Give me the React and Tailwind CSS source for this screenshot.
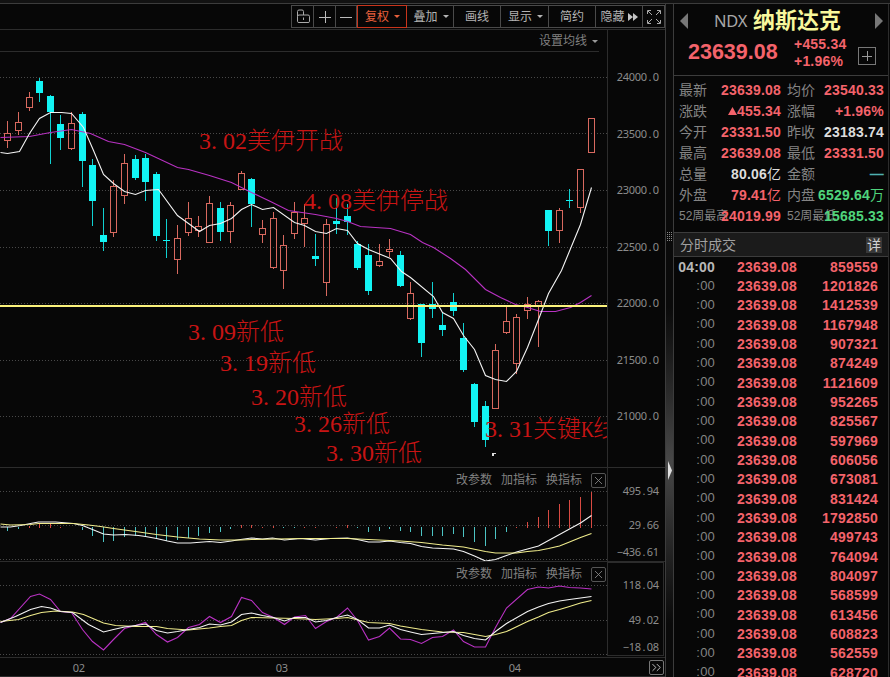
import { ChevronsRight, X } from 'lucide-react';

// [x, high, bodyTop, bodyBottom, low, rising]
const CANDLES = [
  [7, 121, 133, 141, 148, 1], [18, 112, 122, 131, 135, 1], [29, 92, 97, 108, 111, 1],
  [39, 78, 81, 93, 102, 0], [50, 95, 96, 112, 164, 0], [60, 115, 124, 138, 150, 0],
  [71, 112, 123, 149, 150, 1], [82, 112, 114, 161, 187, 0], [92, 159, 165, 201, 226, 0],
  [103, 208, 235, 242, 251, 0], [113, 180, 186, 233, 237, 1], [124, 154, 163, 196, 204, 1],
  [135, 155, 159, 178, 180, 0], [145, 154, 158, 182, 201, 0], [156, 172, 174, 236, 241, 0],
  [166, 219, 240, 241, 258, 0], [177, 225, 238, 260, 274, 1], [188, 202, 218, 233, 236, 1],
  [198, 216, 226, 231, 237, 1], [209, 196, 203, 243, 243, 1], [220, 202, 208, 232, 241, 0],
  [230, 202, 205, 232, 243, 1], [241, 171, 173, 190, 190, 1], [251, 178, 179, 204, 227, 0],
  [262, 220, 228, 235, 243, 1], [273, 212, 218, 268, 269, 1], [283, 235, 245, 271, 289, 1],
  [294, 202, 212, 234, 239, 1], [304, 204, 218, 224, 247, 1], [315, 234, 256, 259, 266, 0],
  [326, 219, 224, 283, 296, 1], [336, 198, 221, 224, 234, 0], [347, 204, 216, 222, 235, 0],
  [357, 241, 244, 268, 270, 0], [368, 244, 255, 291, 295, 0], [379, 244, 261, 266, 267, 1],
  [389, 239, 249, 252, 257, 1], [400, 251, 255, 286, 287, 0], [410, 282, 293, 319, 320, 1],
  [421, 304, 304, 343, 357, 0], [432, 282, 304, 309, 318, 0], [442, 312, 325, 330, 336, 0],
  [453, 293, 302, 311, 316, 0], [463, 323, 338, 370, 372, 0], [474, 383, 384, 422, 427, 0],
  [485, 401, 406, 440, 447, 0], [495, 344, 350, 409, 409, 1], [506, 307, 321, 333, 334, 1],
  [516, 314, 317, 364, 374, 1], [527, 297, 304, 311, 319, 1], [538, 300, 301, 307, 347, 1],
  [548, 210, 210, 231, 246, 0], [559, 208, 210, 231, 243, 1], [569, 189, 200, 201, 208, 0],
  [580, 169, 169, 208, 213, 1], [591, 118, 118, 153, 153, 1],
];

const MA_FAST = '0,152 7,153 19,151 29,133 39,118 50,112 61,112 71,113 83,127 93,150 103,174 113,183 124,191 135,194 145,190 158,189 177,215 188,223 199,231 209,225 220,223 231,218 241,209 251,204 262,209 273,207 294,222 304,225 315,231 326,233 336,228 347,230 357,243 368,249 390,258 401,271 410,277 433,296 442,312 453,318 463,335 474,349 485,375 495,379 506,381 516,371 527,347 538,319 548,293 561,270 580,224 591,187';
const MA_SLOW = '0,137 29,136 50,132 71,129 90,133 108,141 124,144 145,152 177,167 188,169 209,175 231,182 251,192 270,201 288,210 315,214 336,218 347,221 360,226 390,228 410,234 422,242 433,247 450,258 465,269 485,289 500,297 515,304 527,307 540,311 555,311 570,307 580,302 591,295';

// [x, y, up]
const MACD_BARS = [
  [7, 531, 0], [18, 529, 0], [29, 526, 1], [39, 524, 1], [50, 524, 1], [60, 527, 1],
  [82, 530, 0], [92, 536, 0], [103, 542, 0], [113, 541, 0], [124, 537, 0], [135, 536, 0],
  [145, 536, 0], [156, 538, 0], [166, 541, 0], [177, 540, 0], [188, 538, 0], [198, 536, 0],
  [209, 533, 0], [220, 532, 0], [230, 529, 0], [241, 525, 1], [251, 525, 1], [262, 527, 1],
  [273, 526, 1], [283, 528, 0], [294, 528, 0], [304, 527, 1], [315, 527, 1], [336, 527, 1],
  [347, 525, 1], [357, 528, 0], [368, 532, 0], [379, 531, 0], [389, 529, 0], [400, 531, 0],
  [410, 532, 0], [421, 536, 0], [432, 536, 0], [442, 536, 0], [453, 534, 0], [463, 537, 0],
  [474, 542, 0], [485, 546, 0], [495, 539, 0], [506, 532, 0], [516, 527, 1], [527, 522, 1],
  [538, 517, 1], [548, 510, 1], [559, 504, 1], [569, 500, 1], [580, 497, 1], [591, 492, 1],
];
const DIF = '0,526.5 10,526.5 20,525 30,523 38,521.5 55,521.5 73,523 82,525 92,529 103,533.5 113,534.5 125,534 138,535 145,536 156,538 167,540.5 177,542.5 190,542.5 209,541 220,542 231,540.5 240,539 251,537.5 262,538.5 272,537.5 284,539.5 300,538 315,539.5 330,538 347,537.5 357,539 368,541.5 379,541.5 389,540.5 400,542 410,543 421,546 432,547.5 453,548.5 463,551 474,555.5 485,560.5 495,559 506,555 516,551.5 527,548.5 538,545.5 548,540 559,534 569,528.5 580,522.5 591,515';
const DEA = '0,523.5 10,524.5 30,524 38,523 73,523 88,524.5 100,526 113,528 135,531 156,534 177,536.5 199,538.5 220,539.5 240,539.5 251,539 300,538 347,538 368,539 400,540.5 421,542 442,544.5 463,546.5 485,551 495,552.5 516,552.5 527,551 538,550 548,548 559,545.5 569,541.5 580,537 591,533';

const KDJ_J = '0,622 10,618 30,596 39,593.5 50,599 60,611 71,612 82,629 92,641 103,649.5 113,639 124,628 135,625 145,622 156,634 167,641.5 177,637 188,627 199,624 209,616 220,622 231,616 241,597 251,600 262,612 273,617 284,624 294,616.5 305,615 315,628 326,621 336,617 347,607.5 357,620 368,639.5 379,636 389,627.5 400,638.5 410,639 421,643 432,637 442,636 453,629.5 463,641 474,646.5 485,646.5 495,627 506,607.5 527,589 538,586.5 548,587.5 559,585.5 569,587 580,587.5 591,588.5';
const KDJ_K = '0,622 15,616 30,609 41,606 50,607.5 60,611 72,612 88,624 103,631.5 113,629 124,626.5 135,625 145,623.5 156,630 167,632.5 177,631 188,629 199,627 209,623.5 220,624.5 231,621.5 241,614 251,612.5 262,615 273,617 284,620.5 294,617 305,617 315,621.5 326,620 336,617 347,614.5 357,619 368,627.5 379,627.5 389,624.5 400,629 410,631.5 421,634 432,633 453,631 463,635 474,638 485,639.5 495,631 506,623 527,611 538,606.5 548,603 559,600.5 569,599 580,597.5 591,596';
const KDJ_D = '0,621 18,619 30,615 41,612 55,610.5 72,611.5 83,614 103,622.5 115,625 135,626 156,626 167,628 188,629.5 209,627.5 220,626 231,625 241,620 251,617 273,617.5 294,618 315,619 336,618 347,617 368,622 389,623 400,625.5 421,629 442,631.5 463,632 485,636 495,634 506,631 527,621 538,616.5 548,612 559,609 569,606 580,602.5 591,600';

const NOTES = [
  { num: '3.02', text: '美伊开战', pos: 'left-[199px] top-[72px]' },
  { num: '4.08', text: '美伊停战', pos: 'left-[304px] top-[132px]' },
  { num: '3.09', text: '新低', pos: 'left-[188px] top-[263px]' },
  { num: '3.19', text: '新低', pos: 'left-[220px] top-[294px]' },
  { num: '3.20', text: '新低', pos: 'left-[251px] top-[328px]' },
  { num: '3.26', text: '新低', pos: 'left-[294px] top-[355px]' },
  { num: '3.30', text: '新低', pos: 'left-[326px] top-[384px]' },
  { num: '3.31', text: '关键K线', pos: 'left-[485px] top-[360px]' },
];

const QUOTES = [
  ['最新', '23639.08', 'text-[#f4636b]', '均价', '23540.33', 'text-[#f4636b]'],
  ['涨跌', '▲455.34', 'text-[#f4636b]', '涨幅', '+1.96%', 'text-[#f4636b]'],
  ['今开', '23331.50', 'text-[#f4636b]', '昨收', '23183.74', 'text-[#dcdcdc]'],
  ['最高', '23639.08', 'text-[#f4636b]', '最低', '23331.50', 'text-[#f4636b]'],
  ['总量', '80.06亿', 'text-[#dcdcdc]', '金额', '—', 'text-[#4fb0b0]'],
  ['外盘', '79.41亿', 'text-[#f4636b]', '内盘', '6529.64万', 'text-[#4fd47c]'],
  ['52周最高', '24019.99', 'text-[#f4636b]', '52周最低', '15685.33', 'text-[#4fd47c]'],
];

const VOLUMES = [
  859559, 1201826, 1412539, 1167948, 907321, 874249, 1121609, 952265, 825567, 597969, 606056,
  673081, 831424, 1792850, 499743, 764094, 804097, 568599, 613456, 608823, 562559, 628720,
];

// fixed pitch digits
function Digits({ value }) {
  return (
    <span className="flex font-['Noto_Sans'] text-[11px] leading-none text-[#8c8c8c]">
      {value.split('').map((c, i) => (
        <span key={i} className="w-[6px] flex justify-center">{c === '-' ? '−' : c}</span>
      ))}
    </span>
  );
}

function Grid({ lines }) {
  return lines.map((y) => (
    <line key={y} x1="0" x2="607" y1={y + 0.5} y2={y + 0.5} stroke="#484848" strokeDasharray="1 2" shapeRendering="crispEdges" />
  ));
}

function Line({ points, color }) {
  return <polyline points={points} fill="none" stroke={color} strokeWidth="1.1" transform="translate(0.5 0.5)" />;
}

function Candle({ data }) {
  const [x, high, top, bottom, low, rising] = data;
  const color = rising ? '#d8695f' : '#12f4f4';
  if (!rising) {
    return (
      <g fill={color} shapeRendering="crispEdges">
        <rect x={x} y={high} width="1" height={low - high} opacity="0.85" />
        <rect x={x - 3} y={top} width="7" height={bottom - top} />
      </g>
    );
  }
  return (
    <g fill={color} shapeRendering="crispEdges">
      <rect x={x} y={high} width="1" height={top - high} />
      <rect x={x} y={bottom} width="1" height={low - bottom} />
      <rect x={x - 2.5} y={top + 0.5} width="6" height={bottom - top - 1} fill="none" stroke={color} />
    </g>
  );
}

function Caret({ className }) {
  return <span className={`ml-[5px] border-x-[3px] border-x-transparent border-t-[3px] ${className}`} />;
}

function ToolCell({ className, children }) {
  return (
    <div className={`h-[21px] shrink-0 flex items-center justify-center border-r border-[#4a4a4a] ${className}`}>
      {children}
    </div>
  );
}

function Toolbar() {
  return (
    <div className="h-[26px] flex justify-end pt-px border-b border-[#2c2c2c] text-xs text-[#b4b4b4]">
      <div className="h-[23px] w-[374px] flex border border-[#4a4a4a]">
        <ToolCell className="w-[22px]">
          <svg width="16" height="15" fill="none" stroke="#aaa">
            <path d="M2.500 7.500V2.500Q2.500 1 4 1h3Q8.500 1 8.500 2.500V6M2.500 7.500q0-1.500 1.500-1.500h9q1.500 0 1.500 1.500v5q0 1-1.500 1H4q-1.500 0-1.500-1zM8.500 8.500v2.500" />
          </svg>
        </ToolCell>
        <ToolCell className="w-[22px]">
          <svg width="12" height="12" stroke="#bbb" shapeRendering="crispEdges"><path d="M0 6.500h12M6.500 0v12" /></svg>
        </ToolCell>
        <ToolCell className="w-[21px]">
          <svg width="12" height="12" stroke="#bbb" shapeRendering="crispEdges"><path d="M0 6.500h12" /></svg>
        </ToolCell>
        <div className="w-[50px] h-[23px] -mt-px shrink-0 flex items-center justify-center border border-[#c8351c] text-[#e8603c] pl-px">
          复权<Caret className="border-t-[#e8603c]" />
        </div>
        <ToolCell className="w-[47px] pl-[2px]">叠加<Caret className="border-t-[#b4b4b4]" /></ToolCell>
        <ToolCell className="w-[47px]">画线</ToolCell>
        <ToolCell className="w-[48px] pl-[2px]">显示<Caret className="border-t-[#b4b4b4]" /></ToolCell>
        <ToolCell className="w-[47px]">简约</ToolCell>
        <ToolCell className="w-[47px]">
          隐藏
          <svg className="ml-[3px]" width="10" height="8" fill="#c4c4c4"><path d="M0 0l5 4-5 4zM5 0l5 4-5 4z" /></svg>
        </ToolCell>
        <div className="w-[21px] flex items-center justify-center">
          <svg width="14" height="14" fill="none" stroke="#aaa">
            <path d="M.5 4V.5H4M10 .5h3.500V4M13.500 10v3.500H10M4 13.500H.5V10M1 1l4 4M13 1L9 5M13 13L9 9M1 13l4-4" />
          </svg>
        </div>
      </div>
    </div>
  );
}

function PanelActions() {
  return (
    <div className="absolute right-[1px] top-[4px] flex items-center text-xs leading-[15px] text-[#808080]">
      <span className="mr-[9px] pt-px">改参数</span>
      <span className="mr-[9px] pt-px">加指标</span>
      <span className="mr-[9px] pt-px">换指标</span>
      <span className="size-[15px] border border-[#555] rounded-[2px] flex items-center justify-center">
        <X size={13} strokeWidth={1.6} color="#888" className="shrink-0" />
      </span>
    </div>
  );
}

function PriceChart() {
  return (
    <div className="h-[415px] flex">
      <div className="w-[607px] relative overflow-hidden">
        <svg width="607" height="415" viewBox="0 52 607 415" className="block">
          <Grid lines={[77, 133, 190, 247, 303, 360, 416]} />
          {CANDLES.map((c) => <Candle key={c[0]} data={c} />)}
          <Line points={MA_SLOW} color="#b932c3" />
          <Line points={MA_FAST} color="#f4f4f4" />
          <rect x="0" y="305" width="607" height="2" fill="#fbf27c" />
          <path d="M492 453h4v1h-2v2h-2z" fill="#ddd" />
        </svg>
        {NOTES.map((n) => (
          <div key={n.num} className={`absolute flex items-center h-[34px] whitespace-nowrap text-[24px] leading-[34px] text-[#c81414] ${n.pos}`}>
            {n.num.split('').map((c, i) => (
              <span key={i} className="w-[12px] font-['Liberation_Serif']">{c}</span>
            ))}
            <span className="font-light">
              {n.text.split('K')[0]}
              {n.text.includes('K') && <><span className="font-['Liberation_Serif'] inline-block w-[12px] scale-x-75 origin-left">K</span>线</>}
            </span>
          </div>
        ))}
      </div>
      <div className="w-[58px] border-l border-[#2c2c2c] pt-[19px] pl-[9px] flex flex-col">
        {['24000.0', '23500.0', '23000.0', '22500.0', '22000.0', '21500.0', '21000.0'].map((v) => (
          <div key={v} className="h-[56.500px] shrink-0"><Digits value={v} /></div>
        ))}
      </div>
    </div>
  );
}

function Macd() {
  return (
    <div className="h-[94px] flex border-t border-[#2c2c2c]">
      <div className="w-[607px] relative">
        <svg width="607" height="93" viewBox="0 468 607 93" className="block">
          <Grid lines={[491, 525, 559]} />
          {MACD_BARS.map(([x, y, up]) => (
            <rect key={x} x={x} y={up ? y : 527} width="1" height={up ? 528 - y : y - 527} fill={up ? '#d84a42' : '#4cc4c4'} shapeRendering="crispEdges" />
          ))}
          <Line points={DIF} color="#f4f4f4" />
          <Line points={DEA} color="#f0ec8c" />
        </svg>
        <PanelActions />
      </div>
      <div className="w-[58px] border-l border-[#2c2c2c] flex flex-col items-end pr-[6px] pt-[17px]">
        <div className="h-[34px]"><Digits value="495.94" /></div>
        <div className="h-[27px]"><Digits value="29.66" /></div>
        <Digits value="-436.61" />
      </div>
    </div>
  );
}

function Kdj() {
  return (
    <div className="h-[96px] flex border-t border-[#2c2c2c]">
      <div className="w-[607px] relative">
        <svg width="607" height="95" viewBox="0 562 607 95" className="block">
          <Grid lines={[585, 620, 654]} />
          <Line points={KDJ_J} color="#b932c3" />
          <Line points={KDJ_D} color="#f0ec8c" />
          <Line points={KDJ_K} color="#f4f4f4" />
        </svg>
        <PanelActions />
      </div>
      <div className="w-[57px] h-[94px] border border-[#2c2c2c] flex flex-col items-end pr-[4px] pt-[16px]">
        <div className="h-[35px]"><Digits value="118.04" /></div>
        <div className="h-[27px]"><Digits value="49.02" /></div>
        <Digits value="-18.08" />
      </div>
    </div>
  );
}

function DateAxis() {
  return (
    <div className="h-[20px] flex items-center border-y border-[#2c2c2c] pl-[73px]">
      <div className="w-[203px]"><Digits value="02" /></div>
      <div className="w-[233px]"><Digits value="03" /></div>
      <Digits value="04" />
      <span className="ml-auto mr-px size-[15px] border border-[#777] rounded-[2px] flex items-center justify-center">
        <ChevronsRight size={15} strokeWidth={1.6} color="#bbb" className="shrink-0" />
      </span>
    </div>
  );
}

function Splitter() {
  return (
    <div className="w-[9px] flex flex-col items-center border-x border-[#3c3c3c] bg-linear-to-b from-[#0a0a0a] from-45% via-[#484848] via-68% to-[#0a0a0a] to-92%">
      <div className="mt-[228px] grid grid-cols-3 gap-px">
        {Array.from({ length: 15 }, (_, i) => <i key={i} className="size-px bg-[#888]" />)}
      </div>
      <svg className="mt-[220px] ml-[1px]" width="4" height="19" fill="#e0e0e0"><path d="M0 0l4 9.500-4 9.500z" /></svg>
    </div>
  );
}

function QuoteHeader() {
  return (
    <div className="h-[72px] shrink-0 border-b border-[#3c3c3c]">
      <div className="h-[34px] flex items-center">
        <span className="ml-[6px] border-y-[8px] border-y-transparent border-r-[8px] border-r-[#777]" />
        <span className="ml-[26px] w-[34px] font-['Noto_Sans'] text-[16.500px] tracking-[-0.3px] text-[#a8a8a8]">NDX</span>
        <span className="ml-[5px] text-[22px] font-bold text-[#f8f89c] leading-none">纳斯达克</span>
        <span className="ml-auto mr-[5px] border-y-[8px] border-y-transparent border-l-[8px] border-l-[#777]" />
      </div>
      <div className="flex h-[36px] text-[#f4636b] font-bold">
        <span className="ml-[14px] w-[106px] text-[21.500px] leading-[28px]">23639.08</span>
        <div className="w-[64px] text-[14px] leading-[17px] -mt-[2px] tracking-[0.2px]">
          <div>+455.34</div>
          <div>+1.96%</div>
        </div>
        <span className="mt-[9px] size-[18px] border border-[#777] flex items-center justify-center">
          <svg width="10" height="10" stroke="#999" shapeRendering="crispEdges"><path d="M0 5.500h10M5.500 0v10" /></svg>
        </span>
      </div>
    </div>
  );
}

function QuoteCell({ label, value, color, width }) {
  const long = label.length > 2;
  const unit = /[亿万]$/.test(value) ? value.slice(-1) : '';
  return (
    <div className={`flex h-[21px] items-center justify-between ${width}`}>
      <span className={`w-0 whitespace-nowrap text-[#848484] ${long ? 'text-xs' : 'text-sm'}`}>{label}</span>
      <span className={`flex items-center whitespace-nowrap text-sm font-bold tracking-[0.2px] ${color}`}>
        {value.startsWith('▲') ? <><svg width="9" height="8" fill="currentColor"><path d="M4.500 0L9 8H0z" /></svg>{value.slice(1)}</> : value.replace(unit, '')}
        {unit && <span className="font-normal tracking-normal">{unit}</span>}
      </span>
    </div>
  );
}

function QuoteTable() {
  return (
    <div className="h-[156px] shrink-0 pt-[3px] pl-[5px]">
      {QUOTES.map(([l1, v1, c1, l2, v2, c2]) => (
        <div key={l1} className="flex gap-[6px]">
          <QuoteCell label={l1} value={v1} color={c1} width="w-[102px]" />
          <QuoteCell label={l2} value={v2} color={c2} width="w-[97px]" />
        </div>
      ))}
    </div>
  );
}

function TickList() {
  return (
    <div>
      {VOLUMES.map((v, i) => (
        <div key={i} className="flex items-center h-[19.330px] text-sm tracking-[0.2px]">
          <span className={i === 0 ? 'w-[41px] text-right font-bold text-[#b8b8b8]' : 'w-[41px] text-right text-[13px] text-[#848484]'}>
            {i === 0 ? '04:00' : ':00'}
          </span>
          <span className="w-[82px] text-right font-bold text-[#f4636b]">23639.08</span>
          <span className="w-[81px] text-right font-bold text-[#f4636b]">{v}</span>
        </div>
      ))}
    </div>
  );
}

function App() {
  return (
    <div className="w-[890px] h-[677px] overflow-hidden flex flex-col bg-[#070707] font-['Liberation_Sans','Noto_Sans_CJK_SC',sans-serif]">
      <div className="h-[4px] shrink-0 bg-[#121212] border-b border-[#3c3c3c]" />
      <div className="flex h-[673px]">
        <div className="w-[665px] shrink-0 flex flex-col">
          <Toolbar />
          <div className="h-[22px] flex">
            <div className="w-[607px] pr-[8px]">
              <div className="h-[22px] pt-px border-b border-[#2c2c2c] flex items-center justify-end text-xs text-[#808080]">
                设置均线<Caret className="border-t-[#999] mr-px" />
              </div>
            </div>
            <div className="w-[58px] border-l border-[#2c2c2c]" />
          </div>
          <PriceChart />
          <Macd />
          <Kdj />
          <DateAxis />
        </div>
        <Splitter />
        <div className="w-[215px] flex flex-col border-r border-[#2c2c2c] overflow-hidden">
          <QuoteHeader />
          <QuoteTable />
          <div className="h-[25px] shrink-0 flex items-center justify-between pl-[6px] pr-[6px] bg-[#1b1b1b] border-y border-[#3c3c3c] text-sm text-[#a0a0a0]">
            分时成交
            <span className="size-[16px] bg-[#383838] text-[#d0d0d0] flex items-center justify-center">详</span>
          </div>
          <TickList />
        </div>
      </div>
    </div>
  );
}

export default App;
